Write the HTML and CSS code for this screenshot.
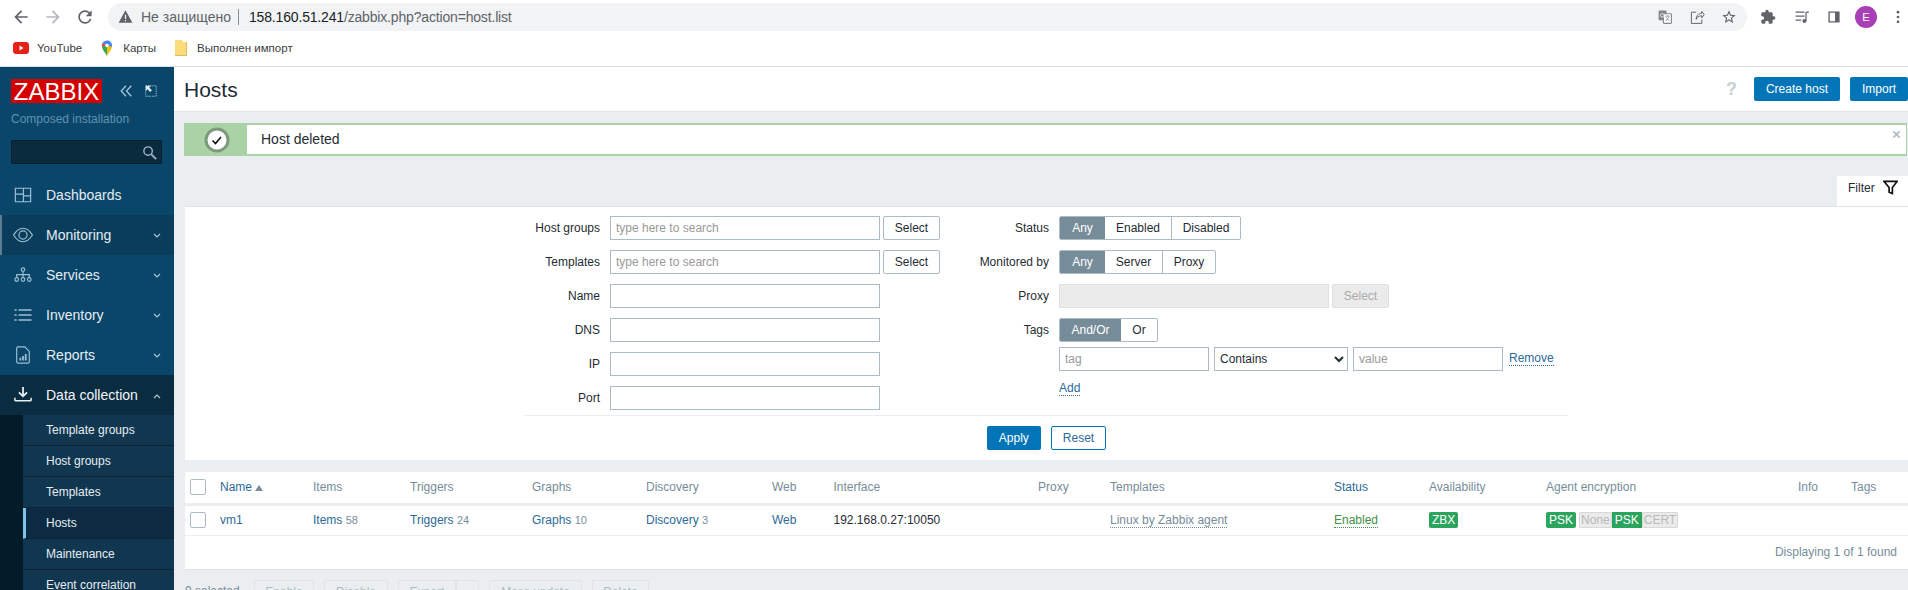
FILE: index.html
```html
<!DOCTYPE html>
<html lang="en">
<head>
    <meta charset="UTF-8">
    <title>Hosts</title>
    <link rel="stylesheet" href="styles.css">
</head>
<body>
    <div class="toolbar">
        <svg class="tb-icon back" viewBox="0 0 24 24"><path d="M20 11H7.8l5.6-5.6L12 4l-8 8 8 8 1.4-1.4L7.8 13H20z"/></svg>
        <svg class="tb-icon forward" viewBox="0 0 24 24"><path d="M4 11h12.2l-5.6-5.6L12 4l8 8-8 8-1.4-1.4 5.6-5.6H4z"/></svg>
        <svg class="tb-icon reload" viewBox="0 0 24 24"><path d="M17.65 6.35A7.96 7.96 0 0 0 12 4c-4.42 0-8 3.58-8 8s3.58 8 8 8c3.73 0 6.84-2.55 7.73-6h-2.08A5.99 5.99 0 0 1 12 18c-3.31 0-6-2.69-6-6s2.69-6 6-6c1.66 0 3.14.69 4.22 1.78L13 11h7V4z"/></svg>
        <div class="omnibox">
            <svg class="warn" viewBox="0 0 24 24"><path d="M12 2 1 22h22z"/><path class="warn-mark" d="M11 9h2v7h-2zM11 17.5h2v2h-2z"/></svg>
            <span class="not-secure">Не защищено</span>
            <span class="omni-sep"></span>
            <span class="url"><b>158.160.51.241</b>/zabbix.php?action=host.list</span>
            <span class="omni-right">
                <svg class="omni-icon" viewBox="0 0 20 20"><rect x="2" y="2" width="10" height="12" rx="1" fill="#80868b"/><rect x="8" y="6" width="10" height="12" rx="1" fill="#fff" stroke="#80868b" stroke-width="1.4"/><path d="M10.5 9h5.5M13 8v1M11 15l4-5M11.5 10.5l4 4.500" stroke="#80868b" fill="none"/><circle cx="6.500" cy="8" r="2.200" fill="none" stroke="#fff"/></svg>
                <svg class="omni-icon" viewBox="0 0 20 20"><path d="M9 4H3v14h13v-5M16 3l3 4-3 4V8.500c-4 0-6 1.500-7 4.500 0-5 3-7.500 7-7.500z" fill="none" stroke="#5f6368" stroke-width="1.200"/></svg>
                <svg class="omni-icon" viewBox="0 0 24 24"><path fill="#5f6368" d="M22 9.240l-7.190-.620L12 2 9.190 8.630 2 9.240l5.460 4.730L5.820 21 12 17.270 18.180 21l-1.630-7.030zM12 15.400l-3.760 2.270 1-4.280-3.320-2.880 4.380-.380L12 6.100l1.710 4.040 4.380.380-3.320 2.880 1 4.280z"/></svg>
            </span>
        </div>
        <div class="tb-right">
            <svg class="tb-small" viewBox="0 0 24 24"><path fill="#5f6368" d="M20.500 11H19V7c0-1.100-.9-2-2-2h-4V3.500C13 2.120 11.880 1 10.500 1S8 2.120 8 3.500V5H4c-1.100 0-1.990.9-1.990 2v3.800H3.500c1.490 0 2.700 1.210 2.700 2.700s-1.210 2.700-2.700 2.700H2V20c0 1.100.9 2 2 2h3.800v-1.500c0-1.490 1.210-2.700 2.700-2.700 1.490 0 2.700 1.210 2.700 2.700V22H17c1.100 0 2-.9 2-2v-4h1.500c1.380 0 2.500-1.120 2.500-2.500S21.880 11 20.500 11z"/></svg>
            <svg class="tb-small" viewBox="0 0 20 20"><path d="M2 4h11M2 9h11M2 14h7M15 4v11" fill="none" stroke="#5f6368" stroke-width="1.500"/><path d="M15 3.200h3.500v1.600H15z" fill="#5f6368"/><circle cx="13" cy="15" r="2.500" fill="#5f6368"/></svg>
            <svg class="tb-small" viewBox="0 0 20 20"><path fill="#5f6368" d="M3 3h14v14H3zM4.700 4.700v10.600h6.600V4.700z" fill-rule="evenodd"/></svg>
            <span class="avatar">E</span>
            <svg class="tb-small dots" viewBox="0 0 20 20"><circle cx="10" cy="4" r="1.700"/><circle cx="10" cy="10" r="1.700"/><circle cx="10" cy="16" r="1.700"/></svg>
        </div>
    </div>

    <div class="bookmarks">
        <span class="bookmark">
            <svg viewBox="0 0 16 16"><rect y="2" width="16" height="12" rx="3" fill="#e62117"/><path d="M6.500 5.500v5l4-2.500z" fill="#fff"/></svg>
            YouTube
        </span>
        <span class="bookmark">
            <svg viewBox="0 0 16 16"><path d="M8 16C6 12 3 10 3 5.500L8 6z" fill="#34a853"/><path d="M8 16c2-4 5-6 5-10.500L8 6z" fill="#fbbc04"/><path d="M3.600 2.800 8 6l-5 .5c-.2-1.500 0-2.700.6-3.700z" fill="#ea4335"/><path d="M3.600 2.800C5 .6 10 -.8 12.400 2.800L8 6z" fill="#4285f4"/><path d="M12.400 2.800c.6 1 .8 2.200.6 3.700L8 6z" fill="#4285f4"/><circle cx="8" cy="5.500" r="1.800" fill="#fff"/></svg>
            Карты
        </span>
        <span class="bookmark">
            <svg viewBox="0 0 16 16"><path d="M2 0h7l1 2h4v14H2z" fill="#fbdc7a"/><path d="M13 2h1v14H2v-1h11z" fill="#e2bd55"/></svg>
            Выполнен импорт
        </span>
    </div>

    <div class="app">
        <aside class="sidebar">
            <div class="logo-row">
                <span class="logo">ZABBIX</span>
                <svg class="side-tool" viewBox="0 0 16 16"><path d="M8 2 2.500 8 8 14M14 2 8.500 8 14 14" fill="none" stroke="#a9cbe0" stroke-width="1.400"/></svg>
                <svg class="side-tool" viewBox="0 0 16 16"><path d="M2 2h12v12H2z" fill="none" stroke="#a9cbe0" stroke-dasharray="1.500 1"/><path d="M2 2h6L6 4l3 3-2 2-3-3-2 2z" fill="#dfeaf1"/></svg>
            </div>
            <div class="install-name">Composed installation</div>
            <div class="side-search">
                <svg viewBox="0 0 16 16"><circle cx="6.500" cy="6.500" r="4.500" fill="none" stroke="#9cb5c5" stroke-width="1.500"/><path d="m10 10 5 5" stroke="#9cb5c5" stroke-width="2"/></svg>
            </div>
            <ul class="nav">
                <li class="nav-item">
                    <svg class="nav-icon" viewBox="0 0 20 20"><path d="M1.500 2.500h17v15h-17zM1.500 9h9M10.500 2.500v15M10.500 11h8"/></svg>
                    Dashboards
                </li>
                <li class="nav-item nav-hover">
                    <svg class="nav-icon wide" viewBox="0 0 24 20"><path d="M1.500 10C5 4.500 8.500 2.500 12 2.500s7 2 10.500 7.500C19 15.500 15.500 17.500 12 17.500S5 15.500 1.500 10z"/><circle cx="12" cy="10" r="4.500"/></svg>
                    Monitoring
                    <svg class="chevron" viewBox="0 0 8 6"><path d="m1 1 3 3 3-3"/></svg>
                </li>
                <li class="nav-item">
                    <svg class="nav-icon" viewBox="0 0 20 20"><circle cx="10" cy="4" r="2"/><circle cx="3" cy="15" r="2"/><circle cx="10" cy="15" r="2"/><circle cx="17" cy="15" r="2"/><path d="M10 6v3M3 13v-3.500h14V13M10 9v4"/></svg>
                    Services
                    <svg class="chevron" viewBox="0 0 8 6"><path d="m1 1 3 3 3-3"/></svg>
                </li>
                <li class="nav-item">
                    <svg class="nav-icon" viewBox="0 0 20 20"><path d="M5 4.500h14.500M5 10h14.500M5 15.500h14.500M.5 4.500h2.500M.5 10h2.500M.5 15.500h2.500" stroke-width="1.700"/></svg>
                    Inventory
                    <svg class="chevron" viewBox="0 0 8 6"><path d="m1 1 3 3 3-3"/></svg>
                </li>
                <li class="nav-item">
                    <svg class="nav-icon" viewBox="0 0 20 20"><path d="M4 1h8l5 5v11.500a1.500 1.500 0 0 1-1.500 1.500h-11A1.500 1.500 0 0 1 3 17.500V2.500A1.500 1.500 0 0 1 4 1z"/><path d="M7 16v-3M10 16v-5M13 16V9" stroke-width="2"/></svg>
                    Reports
                    <svg class="chevron" viewBox="0 0 8 6"><path d="m1 1 3 3 3-3"/></svg>
                </li>
                <li class="nav-item nav-open">
                    <svg class="nav-icon" viewBox="0 0 20 20"><path d="M10 1v10M5.500 7l4.500 4.500L14.500 7" stroke-width="2" stroke="#e6eef3"/><path d="M1 13v2.500a1 1 0 0 0 1 1h16a1 1 0 0 0 1-1V13" stroke-width="1.700" stroke="#e6eef3"/></svg>
                    Data collection
                    <svg class="chevron" viewBox="0 0 8 6"><path d="m1 5 3-3 3 3"/></svg>
                </li>
            </ul>
            <ul class="submenu">
                <li>Template groups</li>
                <li>Host groups</li>
                <li>Templates</li>
                <li class="current">Hosts</li>
                <li>Maintenance</li>
                <li>Event correlation</li>
            </ul>
        </aside>

        <main class="content">
            <header class="page-header">
                <h1>Hosts</h1>
                <span class="help">?</span>
                <button class="btn-main">Create host</button>
                <button class="btn-main">Import</button>
            </header>

            <div class="msg-good">
                <div class="msg-icon">
                    <svg viewBox="0 0 26 26"><circle cx="13" cy="13" r="11" fill="#fff" stroke="#7d9a7c" stroke-width="3"/><path d="m8.500 13.500 3 3 5.500-6.500" fill="none" stroke="#111" stroke-width="1.600"/></svg>
                </div>
                <span class="msg-text">Host deleted</span>
                <svg class="msg-close" viewBox="0 0 10 10"><path d="m1.500 1.500 7 7M8.500 1.500l-7 7"/></svg>
            </div>

            <div class="filter-tabs">
                <div class="filter-tab">
                    Filter
                    <svg viewBox="0 0 16 16"><path d="M1 1.500h14L10 8v6.500L6.500 13V8z" fill="none" stroke="#111" stroke-width="1.800"/></svg>
                </div>
            </div>

            <section class="filter-panel">
                <div class="filter-form">
                    <div class="filter-col left-col">
                        <label>Host groups</label>
                        <div class="field"><input class="wide-input" placeholder="type here to search"><button class="btn-alt">Select</button></div>
                        <label>Templates</label>
                        <div class="field"><input class="wide-input" placeholder="type here to search"><button class="btn-alt">Select</button></div>
                        <label>Name</label>
                        <div class="field"><input class="wide-input"></div>
                        <label>DNS</label>
                        <div class="field"><input class="wide-input"></div>
                        <label>IP</label>
                        <div class="field"><input class="wide-input"></div>
                        <label>Port</label>
                        <div class="field"><input class="wide-input"></div>
                    </div>
                    <div class="filter-col right-col">
                        <label>Status</label>
                        <div class="field">
                            <div class="seg"><span class="on w-any">Any</span><span class="w-enabled">Enabled</span><span class="w-disabled">Disabled</span></div>
                        </div>
                        <label>Monitored by</label>
                        <div class="field">
                            <div class="seg"><span class="on w-any">Any</span><span class="w-server">Server</span><span class="w-proxy">Proxy</span></div>
                        </div>
                        <label>Proxy</label>
                        <div class="field"><input class="proxy-input" disabled><button class="btn-alt" disabled>Select</button></div>
                        <label>Tags</label>
                        <div class="field">
                            <div class="seg"><span class="on w-andor">And/Or</span><span class="w-or">Or</span></div>
                        </div>
                        <span></span>
                        <div class="tag-row">
                            <input class="tag-input" placeholder="tag">
                            <select class="tag-select"><option>Contains</option></select>
                            <input class="tag-input" placeholder="value">
                            <a class="dotted-link">Remove</a>
                        </div>
                        <span></span>
                        <div class="add-row"><a class="dotted-link">Add</a></div>
                    </div>
                </div>
                <div class="filter-actions">
                    <button class="btn-main">Apply</button>
                    <button class="btn-outline">Reset</button>
                </div>
            </section>

            <section class="hosts-list">
                <table>
                    <colgroup>
                        <col class="c-check"><col class="c-name"><col class="c-items"><col class="c-triggers"><col class="c-graphs"><col class="c-discovery"><col class="c-web"><col class="c-interface"><col class="c-proxy"><col class="c-templates"><col class="c-status"><col class="c-avail"><col class="c-enc"><col class="c-info"><col class="c-tags">
                    </colgroup>
                    <thead>
                        <tr>
                            <th><span class="checkbox"></span></th>
                            <th><a>Name</a> <span class="sort-up"></span></th>
                            <th>Items</th>
                            <th>Triggers</th>
                            <th>Graphs</th>
                            <th>Discovery</th>
                            <th>Web</th>
                            <th>Interface</th>
                            <th>Proxy</th>
                            <th>Templates</th>
                            <th><a>Status</a></th>
                            <th>Availability</th>
                            <th>Agent encryption</th>
                            <th>Info</th>
                            <th>Tags</th>
                        </tr>
                    </thead>
                    <tbody>
                        <tr>
                            <td><span class="checkbox"></span></td>
                            <td><a>vm1</a></td>
                            <td><a>Items</a> <span class="count">58</span></td>
                            <td><a>Triggers</a> <span class="count">24</span></td>
                            <td><a>Graphs</a> <span class="count">10</span></td>
                            <td><a>Discovery</a> <span class="count">3</span></td>
                            <td><a>Web</a></td>
                            <td>192.168.0.27:10050</td>
                            <td></td>
                            <td><span class="template-link">Linux by Zabbix agent</span></td>
                            <td><span class="status-on">Enabled</span></td>
                            <td><span class="badge green">ZBX</span></td>
                            <td>
                                <div class="badges">
                                    <span class="badge green">PSK</span>
                                    <div class="badge-group"><span class="badge gray">None</span><span class="badge green flat">PSK</span><span class="badge gray">CERT</span></div>
                                </div>
                            </td>
                            <td></td>
                            <td></td>
                        </tr>
                    </tbody>
                </table>
                <div class="table-stats">Displaying 1 of 1 found</div>
            </section>

            <div class="action-bar">
                <span class="selected-count">0 selected</span>
                <button class="btn-off w-enable">Enable</button>
                <button class="btn-off w-disable">Disable</button>
                <div class="split"><button class="btn-off w-export">Export</button><button class="btn-off w-caret"><svg viewBox="0 0 8 6"><path d="m1 1 3 3 3-3"/></svg></button></div>
                <button class="btn-off w-mass">Mass update</button>
                <button class="btn-off w-delete">Delete</button>
            </div>
        </main>
    </div>
</body>
</html>
```

FILE: styles.css
```css
* {
    box-sizing: border-box;
}
html, body {
    margin: 0;
    height: 590px;
    overflow: hidden;
}
body {
    font-family: "Liberation Sans", Arial, sans-serif;
    font-size: 12px;
    color: #1f2c33;
    background-color: #fff;
}
ul {
    list-style: none;
    margin: 0;
    padding: 0;
}
button, input, select {
    font-family: inherit;
    font-size: 12px;
}

/* Browser chrome */
.toolbar {
    height: 33px;
    display: flex;
    align-items: center;
    padding-left: 11px;
}
.tb-icon {
    width: 20px;
    height: 20px;
    margin-right: 12px;
    fill: #5f6368;
}
.tb-icon.forward {
    fill: #b4b7bb;
}
.omnibox {
    width: 1639px;
    height: 28px;
    margin-left: 1px;
    display: flex;
    align-items: center;
    background-color: #f1f3f4;
    border-radius: 14px;
    padding-left: 10px;
    font-size: 14px;
}
.warn {
    width: 15px;
    height: 15px;
    fill: #5f6368;
}
.warn-mark {
    fill: #f1f3f4;
}
.not-secure {
    margin-left: 8px;
    color: #5f6368;
    width: 89px;
    white-space: nowrap;
}
.omni-sep {
    width: 1px;
    height: 16px;
    margin: 0 10px 0 8px;
    background-color: #8d9094;
}
.url {
    color: #5f6368;
    white-space: nowrap;
    letter-spacing: -0.17px;
}
.url b {
    font-weight: normal;
    color: #202124;
}
.omni-right {
    margin-left: auto;
    display: flex;
    align-items: center;
    gap: 16px;
    padding-right: 10px;
}
.omni-icon {
    width: 16px;
    height: 16px;
}
.tb-right {
    flex: 1;
    display: flex;
    align-items: center;
    padding-left: 13px;
    gap: 16px;
}
.tb-small {
    width: 16px;
    height: 16px;
}
.tb-small:nth-child(2) {
    margin-left: 2px;
}
.avatar {
    width: 22px;
    height: 22px;
    margin-left: -3px;
    border-radius: 50%;
    background-color: #a83fb7;
    color: #fff;
    font-size: 11px;
    display: flex;
    align-items: center;
    justify-content: center;
}
.dots {
    margin-left: -3px;
    fill: #5f6368;
}
.bookmarks {
    height: 34px;
    display: flex;
    align-items: center;
    padding: 0 0 3px 13px;
    gap: 17px;
    border-bottom: 1px solid #dadce0;
    font-size: 11.5px;
    color: #3c4043;
}
.bookmark {
    display: flex;
    align-items: center;
    gap: 8px;
}
.bookmark svg {
    width: 16px;
    height: 16px;
}

/* Zabbix layout */
.app {
    display: flex;
    height: 523px;
}
.sidebar {
    width: 174px;
    flex-shrink: 0;
    background-color: #0a466a;
    padding-top: 12px;
    overflow: hidden;
}
.logo-row {
    display: flex;
    align-items: center;
    padding-left: 11px;
    height: 24px;
}
.logo {
    width: 91px;
    height: 24px;
    line-height: 25px;
    background-color: #d40000;
    color: #fff;
    font-size: 24px;
    text-align: center;
    margin-right: 17px;
}
.side-tool {
    width: 14px;
    height: 14px;
    margin-right: 11px;
}
.install-name {
    margin: 9px 0 0 11px;
    color: #5f93b3;
    line-height: 14px;
}
.side-search {
    margin: 14px 12px 11px 11px;
    height: 24px;
    background-color: #0a2a3e;
    border: 1px solid #062033;
    border-radius: 2px;
    display: flex;
    align-items: center;
    justify-content: flex-end;
    padding-right: 4px;
}
.side-search svg {
    width: 15px;
    height: 15px;
}
.nav-item {
    height: 40px;
    display: flex;
    align-items: center;
    padding-left: 46px;
    position: relative;
    font-size: 14px;
    color: #e3edf3;
}
.nav-hover {
    background-color: #0a3d5c;
    box-shadow: inset 2px 0 0 #5d7f94;
}
.nav-open {
    background-color: #0a2c41;
    color: #f2f6f9;
    height: 40px;
}
.nav-icon {
    position: absolute;
    left: 14px;
    top: 11px;
    width: 18px;
    height: 18px;
    fill: none;
    stroke: #9dc0d4;
    stroke-width: 1.300;
}
.nav-icon.wide {
    left: 12px;
    width: 22px;
}
.chevron {
    position: absolute;
    right: 13px;
    top: 18px;
    width: 8px;
    height: 6px;
    fill: none;
    stroke: #a9c6d8;
    stroke-width: 1.200;
}
.submenu {
    background-color: #041c2a;
    padding-left: 23px;
}
.submenu li {
    height: 31px;
    line-height: 30px;
    padding-left: 23px;
    background-color: #11364f;
    border-bottom: 1px solid #0a2438;
    color: #e3edf3;
}
.submenu li.current {
    background-color: #0c2b42;
    padding-left: 20px;
    border-left: 3px solid #7fc2ea;
}
.content {
    flex: 1;
    background-color: #ebeef0;
    overflow: hidden;
}
.page-header {
    height: 45px;
    padding: 0 0 0 10px;
    display: flex;
    align-items: center;
    background-color: #fff;
    border-bottom: 1px solid #dfe4e7;
    gap: 10px;
}
h1 {
    margin: 0 auto 0 0;
    padding-top: 1px;
    font-size: 21px;
    font-weight: normal;
    color: #1f2c33;
}
.help {
    margin-right: 7px;
    color: #c5ced3;
    font-size: 18px;
    font-weight: bold;
}
.btn-main {
    height: 24px;
    padding: 0 12px;
    border: none;
    border-radius: 2px;
    background-color: #0275b8;
    color: #fff;
}
.msg-good {
    margin: 11px 1px 0 10px;
    height: 33px;
    display: flex;
    align-items: center;
    position: relative;
    background-color: #fff;
    border: 2px solid #a9d3a7;
    border-right-width: 1px;
}
.msg-icon {
    width: 61px;
    height: 100%;
    background-color: #a9d3a7;
    display: flex;
    align-items: center;
    justify-content: center;
}
.msg-icon svg {
    width: 26px;
    height: 26px;
}
.msg-text {
    margin-left: 14px;
    padding-bottom: 1px;
    font-size: 14px;
}
.msg-close {
    position: absolute;
    right: 5px;
    top: 5px;
    width: 9px;
    height: 9px;
    fill: none;
    stroke: #aebcc4;
    stroke-width: 1.800;
}
.filter-tabs {
    height: 50px;
    padding-top: 20px;
    display: flex;
    justify-content: flex-end;
}
.filter-tab {
    width: 71px;
    height: 30px;
    display: flex;
    align-items: center;
    padding: 0 0 7px 11px;
    gap: 8px;
    background-color: #fff;
}
.filter-tab svg {
    width: 15px;
    height: 15px;
}
.filter-panel {
    margin-left: 11px;
    height: 254px;
    background-color: #fff;
    border-top: 1px solid #dfe4e7;
    padding-top: 9px;
}
.filter-form {
    width: 1043px;
    height: 200px;
    margin: 0 auto;
    display: flex;
    border-bottom: 1px solid #ebeef0;
}
.filter-col {
    display: grid;
    align-content: start;
    column-gap: 10px;
    row-gap: 10px;
}
.left-col {
    width: 415px;
    grid-template-columns: 75px 1fr;
}
.right-col {
    grid-template-columns: 109px 1fr;
}
.filter-col label {
    text-align: right;
    line-height: 24px;
    white-space: nowrap;
}
.field {
    display: flex;
    gap: 3px;
    height: 24px;
}
input {
    height: 24px;
    padding: 0 5px;
    border: 1px solid #acbbc2;
    background-color: #fff;
    color: #1f2c33;
    outline: none;
}
input::placeholder {
    color: #999;
}
.wide-input {
    width: 270px;
}
.proxy-input {
    width: 270px;
    background-color: #ebebeb;
    border-color: #e0e0e0;
}
.btn-alt {
    width: 57px;
    height: 24px;
    padding: 0;
    border: 1px solid #acbbc2;
    border-radius: 2px;
    background-color: #fff;
    color: #1f2c33;
}
.btn-alt:disabled {
    background-color: #ebebeb;
    border-color: #e0e0e0;
    color: #aaa;
}
.seg {
    display: flex;
    height: 24px;
    border: 1px solid #acbbc2;
    border-radius: 2px;
    overflow: hidden;
}
.seg span {
    text-align: center;
    line-height: 22px;
    border-left: 1px solid #acbbc2;
}
.seg .on {
    background-color: #768d99;
    color: #fff;
    border-left: none;
}
.seg .on + span {
    border-left: none;
}
.w-any { width: 45px; }
.w-enabled { width: 66px; }
.w-disabled { width: 69px; }
.w-server { width: 57px; }
.w-proxy { width: 53px; }
.w-andor { width: 61px; }
.w-or { width: 36px; }
.tag-row {
    display: flex;
    gap: 5px;
    height: 24px;
    margin-top: -5px;
    align-items: center;
}
.tag-input {
    width: 150px;
}
.tag-select {
    width: 134px;
    height: 24px;
    padding-left: 1px;
    border: 1px solid #acbbc2;
    background-color: #fff;
    color: #1f2c33;
}
.dotted-link {
    margin-left: 1px;
    color: #2c6a99;
    border-bottom: 1px dotted #2c6a99;
    line-height: 13px;
}
.add-row {
    margin-top: -1px;
    height: 24px;
    line-height: 16px;
}
.add-row .dotted-link {
    margin-left: 0;
    display: inline-block;
}
.filter-actions {
    display: flex;
    justify-content: center;
    gap: 10px;
    padding-top: 10px;
}
.btn-outline {
    height: 24px;
    padding: 0 11px;
    border: 1px solid #0275b8;
    border-radius: 2px;
    background-color: #fff;
    color: #2c6a99;
}

/* Hosts table */
.hosts-list {
    margin: 12px 0 0 11px;
    background-color: #fff;
    border-bottom: 1px solid #dfe4e7;
}
table {
    width: 100%;
    table-layout: fixed;
    border-collapse: collapse;
}
.c-check { width: 35px; }
.c-name { width: 93px; }
.c-items { width: 97px; }
.c-triggers { width: 122px; }
.c-graphs { width: 114px; }
.c-discovery { width: 126px; }
.c-web { width: 61.5px; }
.c-interface { width: 204.5px; }
.c-proxy { width: 72px; }
.c-templates { width: 224px; }
.c-status { width: 95px; }
.c-avail { width: 117px; }
.c-enc { width: 252px; }
.c-info { width: 53px; }
.c-tags { width: 57px; }
th {
    height: 32px;
    padding: 0;
    font-weight: normal;
    text-align: left;
    color: #768d99;
    border-bottom: 3px solid #ebeef0;
    white-space: nowrap;
}
td {
    height: 31px;
    padding: 0 0 1px;
    border-bottom: 1px solid #ebeef0;
    white-space: nowrap;
}
a {
    color: #2c6a99;
}
th:first-child, td:first-child {
    padding-left: 5px;
}
.checkbox {
    display: block;
    width: 16px;
    height: 16px;
    border: 1px solid #acbbc2;
    border-radius: 2px;
    background-color: #fff;
}
.sort-up {
    display: inline-block;
    width: 0;
    height: 0;
    border-left: 4px solid transparent;
    border-right: 4px solid transparent;
    border-bottom: 6px solid #768d99;
}
.count {
    color: #768d99;
    font-size: 11px;
}
.template-link {
    color: #768d99;
    border-bottom: 1px dotted #768d99;
}
.status-on {
    color: #429147;
    border-bottom: 1px dotted #429147;
}
.badge {
    display: inline-block;
    height: 16px;
    line-height: 16px;
    padding: 0 3px;
    border-radius: 2px;
    font-size: 12px;
    text-align: center;
}
.badge.green {
    background-color: #2ba55d;
    color: #fff;
}
.badge.gray {
    padding: 0 2px;
    background-color: #ebebeb;
    color: #b9b9b9;
    box-shadow: inset 0 0 0 1px #d8d8d8;
}
.badge.flat {
    border-radius: 0;
}
.badges {
    display: flex;
    gap: 3px;
}
.badge-group {
    display: flex;
}
.table-stats {
    height: 33px;
    line-height: 33px;
    text-align: right;
    padding-right: 11px;
    color: #768d99;
}
.action-bar {
    display: flex;
    align-items: flex-start;
    margin: 10px 0 0 11px;
    gap: 10px;
}
.selected-count {
    width: 59px;
    line-height: 22px;
    color: #768d99;
}
.btn-off {
    height: 24px;
    padding: 0;
    border: 1px solid #dfe4e7;
    border-radius: 2px;
    background-color: #ebeef0;
    color: #acbbc2;
}
.split {
    display: flex;
}
.w-enable { width: 60px; }
.w-disable { width: 64px; }
.w-export { width: 58px; }
.w-caret { width: 23px; }
.w-caret svg {
    width: 8px;
    height: 6px;
    fill: none;
    stroke: #acbbc2;
}
.w-mass { width: 93px; }
.w-delete { width: 57px; }
```
